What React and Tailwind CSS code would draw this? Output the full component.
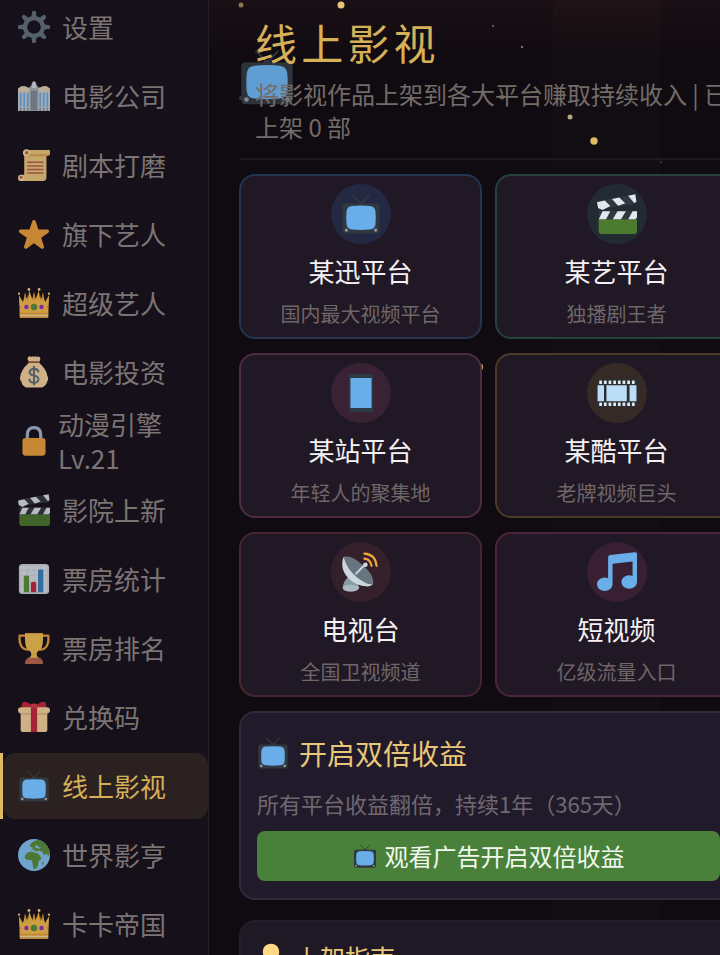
import React from "react";

const Svg = ({ className, children }) => (
  <svg viewBox="0 0 36 36" className={className} aria-hidden="true">
    {children}
  </svg>
);

const Gear = (p) => (
  <Svg {...p}>
    <g fill="#66757f">
      {[0, 45, 90, 135, 180, 225, 270, 315].map((a) => (
        <path key={a} transform={`rotate(${a} 18 18)`} d="M15 8 15.700 2a2.300 2.300 0 0 1 4.600 0L21 8z" />
      ))}
    </g>
    <circle cx="18" cy="18" r="10" fill="none" stroke="#66757f" strokeWidth="4.800" />
  </Svg>
);

const Building = (p) => (
  <Svg {...p}>
    <path fill="#ccd6dd" d="M0 35V11q0-2 2-2.500Q3 7 6 7t4.500 1.500L14 9v26zM22 35V9l3.500-.5Q27 7 30 7t4 1.500q2 .5 2 2.500v24z" />
    <path fill="#e6d3b8" d="M0 14v-3q0-2 2-2.500Q3 7 6 7t4.500 1.500L14 9v5zM22 14V9l3.500-.5Q27 7 30 7t4 1.500q2 .5 2 2.500v3z" />
    <path fill="#aab3ba" d="M13 35V8l2-2q.5-4.500 3-5 2.500.5 3 5l2 2v27z" />
    <path fill="#e1e8ed" d="M16 9V6q0-3 2-4 2 1 2 4v3z" />
    <path fill="#6fb0e6" d="M2 14h2v16H2zm4 0h2v16H6zm4 0h2v16h-2zm14 0h2v16h-2zm4 0h2v16h-2zm4 0h2v16h-2z" />
    <path fill="#66757f" d="M15 12h1.300v22H15zm2.400 0h1.300v22h-1.300zm2.400 0H21v22h-1.200z" />
    <path fill="#8899a6" d="M2 31h2v4H2zm4 0h2v4H6zm4 0h2v4h-2zm14 0h2v4h-2zm4 0h2v4h-2zm4 0h2v4h-2z" />
  </Svg>
);

const Scroll = (p) => (
  <Svg {...p}>
    <path fill="#f5cd80" d="M9 1h24a3.200 3.200 0 0 1 2 6q-1 1-3 1v24q0 4-4 4H4a4 4 0 0 1 0-7h3V6z" />
    <path fill="#d9a04e" d="M12.500 5.500H34q2-.5 2-1.500-.5 4-4 4.500H10q2-.5 2.500-3z" opacity=".7" />
    <circle cx="9.500" cy="4.300" r="4" fill="#ffdf9f" />
    <circle cx="9.800" cy="4.300" r="2" fill="#c1694f" />
    <circle cx="3.500" cy="32.500" r="3.500" fill="#ffdf9f" />
    <circle cx="3.500" cy="31.800" r="1.700" fill="#c1694f" />
    <path stroke="#b5644c" strokeWidth="1.700" strokeLinecap="round" d="M11 15h17M11 19h17M11 23h17M11 27h17" />
  </Svg>
);

const Star = (p) => (
  <Svg {...p}>
    <path
      fill="#f4a53c"
      d="M27.287 34.627c-.404 0-.806-.124-1.152-.371L18 28.422l-8.135 5.834c-.343.247-.743.371-1.147.371-.397 0-.795-.12-1.138-.361-.694-.492-.984-1.375-.724-2.186l3.034-9.792-8.062-5.681c-.685-.498-.97-1.381-.708-2.186.266-.804 1.016-1.350 1.864-1.357l9.947-.014 3.179-9.549c.268-.803 1.021-1.344 1.866-1.344.848 0 1.598.541 1.866 1.344l3.109 9.549 10.018.014c.848.007 1.598.553 1.864 1.357.262.805-.023 1.688-.708 2.186l-7.960 5.667 3.040 9.792c.26.811-.033 1.694-.724 2.186-.345.241-.741.361-1.194.361z"
    />
  </Svg>
);

const Crown = (p) => (
  <Svg {...p}>
    <path fill="#e8952a" d="M9 20 11 9l3 9zM22 18l3-9 2 11zM15 17l3-11 3 11z" />
    <path fill="#fbc34d" d="M2 33 1 9l4.500 8L8 8.500l3 7L12.500 4l4 10.500L18 8l1.500 6.500 4-10.500L25 15.500l3-7 2.500 8.500L35 9l-1 24z" />
    <path fill="#e8952a" d="M7 9.500 8 6l1 3.500-.5 6zM27 9.500 28 6l1 3.500-1.500 6zM17 10l1-4 1 4-1 6z" />
    <path fill="#ffe0a0" d="M2 31h32v2.500H2z" />
    <path fill="#f0a63c" d="M2 29h32v2H2zM2 33.500h32V35H2z" />
    <g fill="#ffd983">
      <circle cx="1.200" cy="7.500" r="1.300" />
      <circle cx="12.300" cy="2.800" r="1.600" />
      <circle cx="23.700" cy="2.800" r="1.600" />
      <circle cx="34.800" cy="7.500" r="1.300" />
    </g>
    <circle cx="18" cy="22.500" r="3.600" fill="#5c913b" />
    <circle cx="9.500" cy="22.500" r="2.500" fill="#9c2fd0" />
    <circle cx="26.500" cy="22.500" r="2.500" fill="#9c2fd0" />
    <path fill="#dd2e44" d="M2 20.500q2 2 0 4zM34 20.500q-2 2 0 4z" />
  </Svg>
);

const MoneyBag = (p) => (
  <Svg {...p}>
    <path fill="#fddaa0" d="M12 8Q3 16 2.500 24 1.500 27 4 29q0 4 5 6.500h18q5-2 6-7 2-3 0-6Q32 15 24 8z" />
    <path fill="#fddaa0" d="M11.500 1q1.500-1.200 3.500 0 1.500-1.200 3 0 2-1.200 3.500 0 2-1.200 3 .5 1.500 1-.5 5H12.500q-3-3.500-1-5.500z" />
    <path fill="#bf7052" d="M12 5.500h12q1.500 1 0 2.200H12q-1.500-1.200 0-2.200z" />
    <path fill="none" stroke="#67757f" strokeWidth="2.300" strokeLinecap="round" d="M23 17.500q-1-3-5-3t-5 3.500q0 3 5 4t5 4.500q-.5 3.500-5 3.500t-5.200-3.500M18 12v20" />
  </Svg>
);

const Lock = (p) => (
  <Svg {...p}>
    <path fill="none" stroke="#aab8d2" strokeWidth="3.600" d="M10.500 18v-7q0-8 7.500-8t7.500 8v7" />
    <rect x="5" y="14.500" width="26" height="20" rx="3.500" fill="#f4a53c" />
  </Svg>
);

const Clapper = (p) => (
  <Svg {...p}>
    <path fill="#31373d" d="m0 6.500 33-6L35 9 1 14z" />
    <path fill="#31373d" d="M1.500 15H36v9H1.500z" />
    <path fill="#e1e8ed" d="m0 7.500 7-1.600 5 5L5 14.500l-4-2zM13.500 4.500l6.500-1.400 5.500 5.200L19 10.600zM28 1.500 34.500.2 35.500 7l-2 1zM5 15.500h7L8 23H1.500zM18.500 15.500H26L21.500 23H14zM32 15.500h4V21l-1.500 2H28z" />
    <path fill="#4c7a2e" d="M1.500 23H36v10q0 3-3 3H4.500q-3 0-3-3z" />
  </Svg>
);

const Chart = (p) => (
  <Svg {...p}>
    <rect x="1" y="1" width="34" height="34" rx="4" fill="#ccd6dd" />
    <rect x="3" y="3" width="30" height="30" rx="1" fill="#e1e8ed" />
    <path stroke="#ccd6dd" strokeWidth="1" d="M11 2v32M18 2v32M25 2v32M2 8h32M2 14h32M2 20h32M2 26h32" />
    <path fill="#5c913b" d="M6.500 15q3-2 6 0v18h-6z" />
    <path fill="#c8283e" d="M14.500 22q3-2 6 0v11h-6z" />
    <path fill="#3b88c3" d="M22.500 8q3-2 6 0v25h-6z" />
  </Svg>
);

const Trophy = (p) => (
  <Svg {...p}>
    <path fill="none" stroke="#f0a63c" strokeWidth="2.600" d="M9 4H2q-1 7 1.500 11.500T12 20M27 4h7q1 7-1.500 11.500T24 20" />
    <path fill="#f8c653" d="M8 1h20q1 15-3 19-4 2-4 5t4 5H11q4-2 4-5t-4-5Q7 16 8 1z" />
    <path fill="#f0a63c" d="M8 1h20l-.1 1.500H8.100z" />
    <path fill="#c1694f" d="M11 29h14l3 4v3H8v-3z" />
  </Svg>
);

const Gift = (p) => (
  <Svg {...p}>
    <path fill="#c8283e" d="M18 7Q9-1 5.500 1.500 3 4 5 8h26q2-4-.5-6.500Q27-1 18 7z" />
    <rect x="3" y="12" width="30" height="23" rx="3" fill="#fddaa0" />
    <rect x="0" y="7" width="36" height="7" rx="3.500" fill="#fddaa0" />
    <path fill="#d9a878" d="M3 14h30v1.200H3z" />
    <path fill="#c8283e" d="M14.500 3h7v32h-7z" />
    <path fill="#dd3e50" d="M14.500 4q3.500-2 7 0v4h-7z" />
  </Svg>
);

const Earth = (p) => (
  <Svg {...p}>
    <circle cx="18" cy="18" r="18" fill="#88c9f9" />
    <path fill="#5c913b" d="M13 8q2-5 8-6.500 4-1 7 1.500 5 3 7.500 10 .5 3-.5 6l-3-2-3 1-2-4-4-1-2 1q-3 0-3-2.500L14.500 13l2.500-3zM9 17q2-3 6-3l6 2q3 0 3.500 3l2 2q-1 3-3.500 4l-.5 5q-2 4-4 4-2-1-2-5t-1.500-5.500Q9 24 7.500 21.500 8 18 9 17zM27 27l1.500-2 .5 3-1.500 2z" />
    <path fill="#88c9f9" d="m19 8 3-1 1 2 3 .5-1.500 1.500L20 10z" />
  </Svg>
);

const Tv = (p) => (
  <Svg {...p}>
    <path fill="none" stroke="#353c43" strokeWidth="1.300" strokeLinecap="round" d="m11 1.500 7 7 7-7" />
    <path fill="#353c43" d="M14.500 9q3.500-3 7 0z" />
    <rect x="1.500" y="8.500" width="33" height="27" rx="2.500" fill="#31383f" />
    <path fill="#69ade9" d="M5 15.500Q5.500 11 10 10.700q8-.7 16 0 4.500.3 5 4.800.6 6 0 12-.5 4-5 4.400-8 .8-16 0-4.500-.4-5-4.400-.6-6 0-12z" />
    <circle cx="4.800" cy="32.500" r="1.500" fill="#8899a6" />
    <circle cx="31.200" cy="32.500" r="1.500" fill="#8899a6" />
  </Svg>
);

const Phone = (p) => (
  <Svg {...p}>
    <rect x="7" y="1" width="22" height="34" rx="2" fill="#2b3a44" />
    <path fill="#69ade9" d="M8.500 4.500h19v27h-19z" />
  </Svg>
);

const Film = (p) => (
  <Svg {...p}>
    <path fill="#292f33" d="M0 5.500h36v25H0z" />
    <path fill="#bbddf5" d="M.5 11h5.800v14.500H.5zM8.500 11h18.300v14.500H8.500zM29.300 11h6.200v14.500h-6.200z" />
    <g fill="#e1e8ed">
      {[2, 6.2, 10.4, 14.6, 18.8, 23, 27.2, 31.4].map((x) => (
        <React.Fragment key={x}>
          <rect x={x} y="6.800" width="2.500" height="3.200" rx=".5" />
          <rect x={x} y="26.600" width="2.500" height="3.200" rx=".5" />
        </React.Fragment>
      ))}
    </g>
  </Svg>
);

const Satellite = (p) => (
  <Svg {...p}>
    <path fill="#8899a6" d="M6 23q-4 4-4.500 9Q3 35.500 9 35.500t7-3.500l-1-6z" />
    <path fill="#aab8c2" d="M1.500 32q2-3 8-2.500t7 2.500q-1 3.500-8 3.500T1.500 32z" />
    <path fill="#ccd6dd" d="M2 5Q-1 15 6 23t18 8q4 0 5-3L4 4z" />
    <path fill="#66757f" d="M2.500 5Q6 2 15 8q8 6 12 12 3 6 1.500 9-5 1-14-6T2.500 5z" />
    <path stroke="#ccd6dd" strokeWidth="1.800" strokeLinecap="round" d="m13.500 19.500 8-8" />
    <circle cx="22" cy="11.500" r="2" fill="#ccd6dd" />
    <path fill="none" stroke="#f4a53c" strokeWidth="1.900" strokeLinecap="round" d="M21 1.500q10 .5 11 11M21 6q5.500.5 6.500 6.500" />
  </Svg>
);

const Music = (p) => (
  <Svg {...p}>
    <path
      fill="#69ade9"
      d="M34.209.206 11.791 2.793C10.806 2.907 10 3.811 10 4.803v18.782C9.090 23.214 8.075 23 7 23c-3.865 0-7 2.685-7 6s3.135 6 7 6 7-2.686 7-6V10.539l18-2.077v13.124c-.91-.372-1.925-.586-3-.586-3.865 0-7 2.685-7 6s3.135 6 7 6 7-2.686 7-6V1.803c0-.992-.806-1.710-1.791-1.597z"
    />
  </Svg>
);

const Bulb = (p) => (
  <Svg {...p}>
    <path fill="#ffd983" d="M18 1C11 1 7.500 6 7.500 11.500 7.500 18 12 20 12.500 27h11C24 20 28.500 18 28.500 11.500 28.500 6 25 1 18 1z" />
    <path fill="#99aab5" d="M12.500 28h11v4q-1 4-5.500 4t-5.500-4z" />
  </Svg>
);

const navItems = [
  { label: "设置", Icon: Gear },
  { label: "电影公司", Icon: Building },
  { label: "剧本打磨", Icon: Scroll },
  { label: "旗下艺人", Icon: Star },
  { label: "超级艺人", Icon: Crown },
  { label: "电影投资", Icon: MoneyBag },
  { label: "动漫引擎", level: "Lv.21", Icon: Lock },
  { label: "影院上新", Icon: Clapper },
  { label: "票房统计", Icon: Chart },
  { label: "票房排名", Icon: Trophy },
  { label: "兑换码", Icon: Gift },
  { label: "线上影视", Icon: Tv, active: true },
  { label: "世界影亨", Icon: Earth },
  { label: "卡卡帝国", Icon: Crown },
];

const platforms = [
  { name: "某迅平台", desc: "国内最大视频平台", Icon: Tv, border: "border-[#25344f]", circle: "bg-[#232942]" },
  { name: "某艺平台", desc: "独播剧王者", Icon: Clapper, border: "border-[#25423f]", circle: "bg-[#222b33]" },
  { name: "某站平台", desc: "年轻人的聚集地", Icon: Phone, border: "border-[#4d2c43]", circle: "bg-[#382233]" },
  { name: "某酷平台", desc: "老牌视频巨头", Icon: Film, border: "border-[#4d3a26]", circle: "bg-[#362a26]" },
  { name: "电视台", desc: "全国卫视频道", Icon: Satellite, border: "border-[#472630]", circle: "bg-[#34202a]" },
  { name: "短视频", desc: "亿级流量入口", Icon: Music, border: "border-[#50243d]", circle: "bg-[#381f32]" },
];

const sparks = [
  [241, 5, 2.5, "#8a7550"],
  [341, 5, 3.5, "#e6c678"],
  [493, 26, 1.2, "#5a5456"],
  [522, 47, 1.2, "#77706c"],
  [502, 97, 2.5, "#6d5b3c"],
  [570, 117, 2.5, "#b5a684"],
  [594, 141, 3.7, "#dfbb62"],
  [661, 162, 1.2, "#38333a"],
  [241, 98, 2, "#3c3a3c"],
  [480, 367, 3.2, "#c09a58"],
];

function NavItem({ label, level, Icon, active }) {
  return (
    <li className={"flex shrink-0 border-l-[3px] " + (active ? "border-[#e0b964]" : "border-transparent")}>
      <button
        type="button"
        aria-current={active ? "page" : undefined}
        className={
          "flex h-[66px] w-full items-center rounded-xl pl-[15px] text-left text-[26px] " +
          (level ? "gap-2 leading-[34px] " : "gap-3 leading-9 ") +
          (active ? "bg-[#2b2120] text-[#d6b058]" : "text-[#7c7474]")
        }
      >
        <Icon className={"size-8 shrink-0 " + (active ? "" : "opacity-80")} />
        <span>
          {label}
          {level && <span className="block">{level}</span>}
        </span>
      </button>
    </li>
  );
}

function PlatformCard({ name, desc, Icon, border, circle }) {
  return (
    <button
      type="button"
      className={"flex flex-col items-center rounded-2xl border-2 bg-[#211825] pt-2 pb-[9px] " + border}
    >
      <span className={"flex size-[60px] items-center justify-center rounded-full " + circle}>
        <Icon className="size-10" />
      </span>
      <span className="mt-[9px] text-[26px] leading-9 text-[#f4f0f4]">{name}</span>
      <span className="mt-[11px] text-xl leading-7 text-[#6f6668]">{desc}</span>
    </button>
  );
}

export default function App() {
  return (
    <div className="flex h-screen overflow-hidden bg-[#100b11] font-['Noto_Sans_CJK_SC',sans-serif]">
      <aside className="w-[209px] shrink-0 overflow-hidden border-r border-[#241f27] bg-[#15101a]">
        <nav className="-mt-[6px]">
          <ul className="flex flex-col gap-[3px]">
            {navItems.map((item) => (
              <NavItem key={item.label} {...item} />
            ))}
          </ul>
        </nav>
      </aside>

      <main className="relative min-w-0 flex-1 overflow-hidden bg-linear-to-b from-[#190f14] to-[#100b11] to-[60px] pl-[30px]">
        <div className="absolute inset-y-0 left-[344px] w-[107px] bg-linear-to-b from-[#201216] to-[#120d12] to-[60px]" />
        <svg className="absolute inset-0 h-full w-full" aria-hidden="true">
          {sparks.map(([x, y, r, fill]) => (
            <circle key={`${x}-${y}`} cx={x - 209} cy={y} r={r} fill={fill} />
          ))}
        </svg>

        <div className="relative -mr-[18px]">
          <header className="relative border-b-2 border-[#1d181c] pt-3 pb-[15px] pl-4">
            <Tv className="absolute top-[49px] left-0 size-14 opacity-90" />
            <h1 className="relative text-[42px] leading-[60px] tracking-widest text-[#d6b058]">线上影视</h1>
            <p className="relative mt-[5px] text-2xl leading-[33px] text-[#736c68]">
              将影视作品上架到各大平台赚取持续收入 | 已上架 0 部
            </p>
          </header>

          <section className="mt-[14px] grid grid-cols-2 gap-x-[13px] gap-y-[14px]">
            {platforms.map((p) => (
              <PlatformCard key={p.name} {...p} />
            ))}
          </section>

          <section className="mt-[14px] rounded-2xl border-2 border-[#322a3b] bg-[#211a2b] px-4 pt-[22px] pb-[17px]">
            <h2 className="flex items-center gap-[10px] text-[28px] leading-9 text-[#e8c878]">
              <Tv className="size-8 shrink-0" />
              开启双倍收益
            </h2>
            <p className="mt-[17px] text-[22px] leading-[30px] text-[#6f6870]">所有平台收益翻倍，持续1年（365天）</p>
            <button
              type="button"
              className="mt-[13px] flex h-[50px] w-full items-center justify-center gap-2 rounded-lg bg-[#49803a] text-2xl text-[#f0f8ee]"
            >
              <Tv className="size-6 shrink-0" />
              观看广告开启双倍收益
            </button>
          </section>

          <section className="mt-5 rounded-2xl border-2 border-[#251d29] bg-[#1f1825] px-4 pt-[17px] pb-5">
            <h2 className="flex items-center gap-[10px] text-[25px] leading-9 text-[#e8c878]">
              <Bulb className="size-7 shrink-0" />
              上架指南
            </h2>
          </section>
        </div>
      </main>
    </div>
  );
}
